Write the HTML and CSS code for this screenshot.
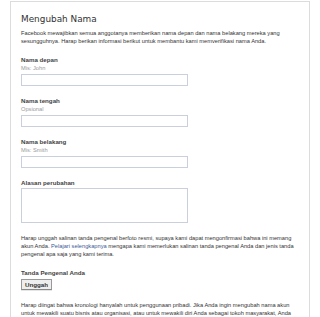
FILE: index.html
```html
<!DOCTYPE html>
<html lang="id">
<head>
<meta charset="UTF-8" />
<meta name="viewport" content="width=device-width, initial-scale=1" />
<title>Mengubah Nama</title>
<link rel="stylesheet" href="styles.css">
</head>
<body>

<div class="panel">
  <h2>Mengubah Nama</h2>
  <p>Facebook mewajibkan semua anggotanya memberikan nama depan dan nama belakang mereka yang sesungguhnya. Harap berikan informasi berikut untuk membantu kami memverifikasi nama Anda.</p>

  <div class="field">
    <label>Nama depan</label>
    <div class="hint">Mis: John</div>
    <input type="text" />
  </div>

  <div class="field">
    <label>Nama tengah</label>
    <div class="hint">Opsional</div>
    <input type="text" />
  </div>

  <div class="field">
    <label>Nama belakang</label>
    <div class="hint">Mis: Smith</div>
    <input type="text" />
  </div>

  <div class="field">
    <label>Alasan perubahan</label>
    <textarea></textarea>
  </div>

  <p class="gap">Harap unggah salinan tanda pengenal berfoto resmi, supaya kami dapat mengonfirmasi bahwa ini memang akun Anda. <a href="#">Pelajari selengkapnya</a> mengapa kami memerlukan salinan tanda pengenal Anda dan jenis tanda pengenal apa saja yang kami terima.</p>

  <div class="field">
    <label>Tanda Pengenal Anda</label>
    <button>Unggah</button>
  </div>

  <p class="gap">Harap diingat bahwa kronologi hanyalah untuk penggunaan pribadi. Jika Anda ingin mengubah nama akun untuk mewakili suatu bisnis atau organisasi, atau untuk mewakili diri Anda sebagai tokoh masyarakat, Anda bisa membuat Halaman.</p>
</div>

</body>
</html>
```

FILE: styles.css
```css
body {
  margin: 0;
  padding-top: 1px;
  background: #fff;
  font-family: "Liberation Sans", Arial, sans-serif;
  font-size: 5.7px;
  line-height: 8px;
  color: #333;
}
.panel {
  width: 278px;
  margin-left: 10px;
  padding: 11px 10px 10px 10px;
  border: 1px solid #dcdcdc;
  border-bottom: none;
}
h2 {
  margin: 0 0 4px 0;
  font-family: "DejaVu Sans", Verdana, sans-serif;
  font-weight: normal;
  font-size: 8.9px;
  line-height: 12px;
  color: #333;
}
p {
  margin: 0;
}
p.gap {
  margin-top: 11px;
}
a {
  color: #3b5998;
  text-decoration: none;
}
.field {
  margin-top: 11px;
}
.field label {
  display: block;
  font-size: 6.2px;
  font-weight: bold;
  color: #444;
}
.hint {
  color: #999;
}
.field input,
.field textarea {
  display: block;
  box-sizing: border-box;
  width: 167px;
  height: 12px;
  margin: 2px 0 0 0;
  padding: 0;
  border: 1px solid #c9cfdc;
  background: #fff;
  font: inherit;
}
.field textarea {
  height: 35px;
  margin-top: 1px;
  resize: none;
}
.field button {
  display: block;
  box-sizing: border-box;
  width: 31px;
  height: 11px;
  margin-top: 2px;
  padding: 0;
  border: 1px solid #999;
  border-bottom-color: #888;
  background: #eee;
  box-shadow: 0 1px 0 rgba(0, 0, 0, 0.1);
  font: bold 6.2px "Liberation Sans", Arial, sans-serif;
  color: #333;
}
```
